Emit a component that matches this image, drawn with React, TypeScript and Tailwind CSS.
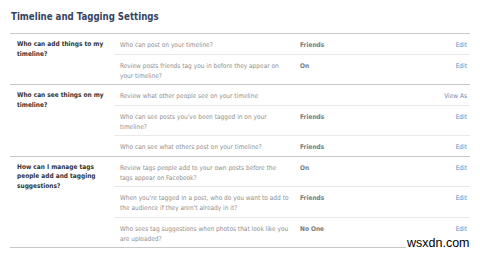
type Row = {
  text: string;
  value?: string;
  action: string;
};

type Section = {
  label: string;
  rows: Row[];
};

const sections: Section[] = [
  {
    label: 'Who can add things to my timeline?',
    rows: [
      { text: 'Who can post on your timeline?', value: 'Friends', action: 'Edit' },
      {
        text: 'Review posts friends tag you in before they appear on your timeline?',
        value: 'On',
        action: 'Edit',
      },
    ],
  },
  {
    label: 'Who can see things on my timeline?',
    rows: [
      { text: 'Review what other people see on your timeline', action: 'View As' },
      {
        text: "Who can see posts you've been tagged in on your timeline?",
        value: 'Friends',
        action: 'Edit',
      },
      { text: 'Who can see what others post on your timeline?', value: 'Friends', action: 'Edit' },
    ],
  },
  {
    label: 'How can I manage tags people add and tagging suggestions?',
    rows: [
      {
        text: 'Review tags people add to your own posts before the tags appear on Facebook?',
        value: 'On',
        action: 'Edit',
      },
      {
        text: "When you're tagged in a post, who do you want to add to the audience if they aren't already in it?",
        value: 'Friends',
        action: 'Edit',
      },
      {
        text: 'Who sees tag suggestions when photos that look like you are uploaded?',
        value: 'No One',
        action: 'Edit',
      },
    ],
  },
];

const SettingRow = ({ row, first }: { row: Row; first: boolean }) => {
  return (
    <div
      className={`flex flex-row items-start pt-[6px] pb-[3.5px] pl-[6px] pr-[3px] ${first ? '' : 'border-t border-[#e9e9e9]'}`}
    >
      <div className="w-[169px] text-[#8f8f8f]">{row.text}</div>
      <div className="ml-[11px] w-[100px] font-bold text-[#7a7a7a]">{row.value}</div>
      <a className="ml-auto text-[#6d84b4]">{row.action}</a>
    </div>
  );
};

export default function App() {
  return (
    <div className="relative w-[480px] h-[255px] overflow-hidden bg-white font-['DejaVu_Sans_Condensed','DejaVu_Sans',sans-serif]">
      <div className="ml-[10px] w-[460px]">
        <h2 className="pt-[11px] pb-[10px] pl-px text-[9.6px] leading-[12px] font-bold text-[#36445f]">
          Timeline and Tagging Settings
        </h2>
        <div className="border-t border-[#c8c8c8] text-[6.5px] leading-[10px]">
          {sections.map((section) => (
            <div key={section.label} className="flex flex-row border-b border-[#c8c8c8]">
              <div className="w-[104px] shrink-0 pl-[7px] pr-[3px] pt-[6px] leading-[9.5px] font-bold text-[#333]">
                {section.label}
              </div>
              <div className="flex-1 flex flex-col">
                {section.rows.map((row, i) => (
                  <SettingRow key={row.text} row={row} first={i === 0} />
                ))}
              </div>
            </div>
          ))}
        </div>
      </div>
      <div className="absolute left-[406px] top-[237px] bg-white px-px text-[12.5px] leading-[12px] text-black font-['Liberation_Sans',sans-serif]">
        wsxdn.com
      </div>
    </div>
  );
}
